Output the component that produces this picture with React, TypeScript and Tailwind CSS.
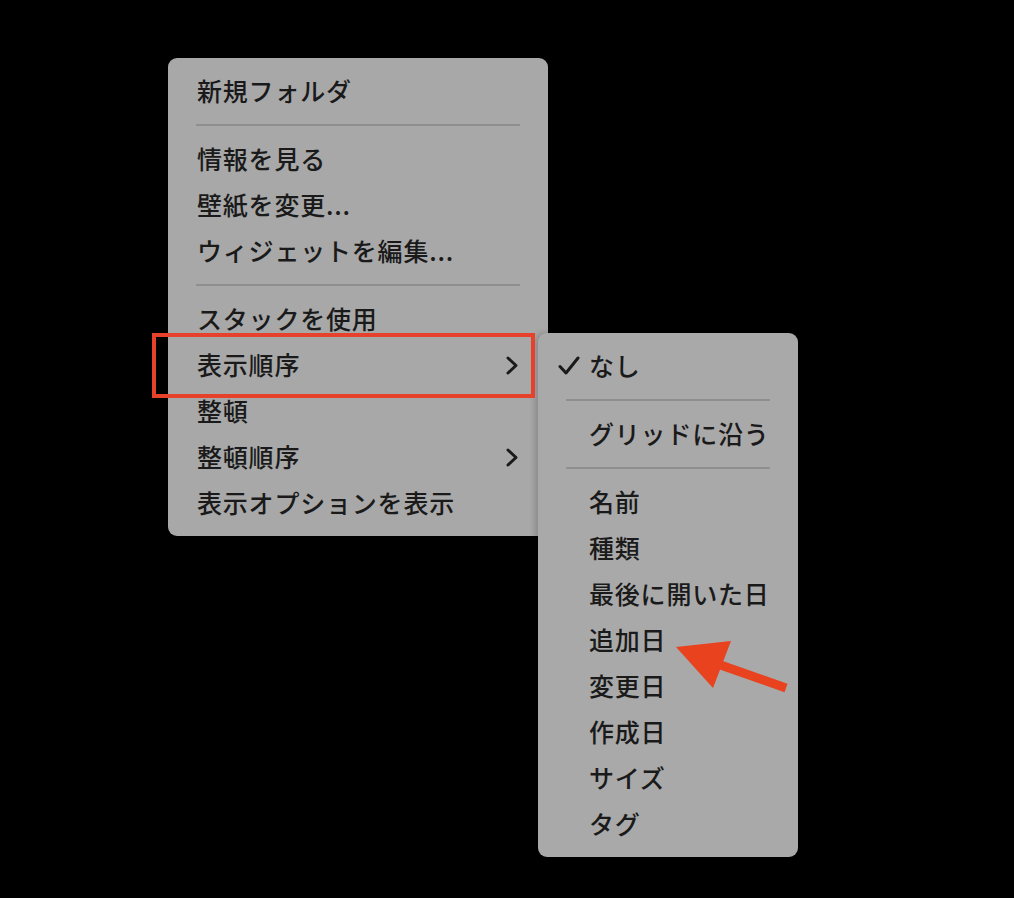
import React from "react";

const font = { fontFamily: '"Noto Sans CJK JP", "Noto Sans", sans-serif' };

function Sep() {
  return (
    <div className="h-[22px] flex items-center px-[28px]">
      <div className="h-[2px] w-full bg-[#8f8f8f]" />
    </div>
  );
}

function Item({ label, chevron, check, pl = "pl-[29px]" }: { label: string; chevron?: boolean; check?: boolean; pl?: string }) {
  return (
    <div className={`relative h-[46px] flex items-center ${pl} pr-[30px] text-[25px] leading-none tracking-[0.8px] text-[#1a1a1a] font-medium`}>
      {check && (
        <svg className="absolute left-[20px] top-[13px]" width="22" height="20" viewBox="0 0 22 20">
          <polyline points="2,10.5 8,17 20,2" fill="none" stroke="#1a1a1a" strokeWidth="3" strokeLinecap="round" strokeLinejoin="round" />
        </svg>
      )}
      <span className="flex-1 whitespace-nowrap -mt-[1px]">{label}</span>
      {chevron && (
        <svg className="-ml-[1px]" width="12" height="19" viewBox="0 0 12 19">
          <polyline points="2,2 10,9.5 2,17" fill="none" stroke="#1a1a1a" strokeWidth="3" strokeLinecap="round" strokeLinejoin="round" />
        </svg>
      )}
    </div>
  );
}

export default function App() {
  return (
    <div className="relative w-[1014px] h-[898px] bg-black overflow-hidden" style={font}>
      <div className="pt-[58px] pl-[168px]">
        <div className="w-[380px] rounded-[9px] bg-[#a8a8a8] py-[10px]">
          <Item label="新規フォルダ" />
          <Sep />
          <Item label="情報を見る" />
          <Item label="壁紙を変更..." />
          <Item label="ウィジェットを編集..." />
          <Sep />
          <Item label="スタックを使用" />
          <Item label="表示順序" chevron />
          <Item label="整頓" />
          <Item label="整頓順序" chevron />
          <Item label="表示オプションを表示" />
        </div>
      </div>

      <div className="absolute left-[538px] top-[333px] w-[260px] rounded-[9px] bg-[#a9a9a9] py-[10px] shadow-[-3px_0_6px_rgba(0,0,0,0.18)]">
        <Item label="なし" check pl="pl-[51px]" />
        <Sep />
        <Item label="グリッドに沿う" pl="pl-[51px]" />
        <Sep />
        <Item label="名前" pl="pl-[51px]" />
        <Item label="種類" pl="pl-[51px]" />
        <Item label="最後に開いた日" pl="pl-[51px]" />
        <Item label="追加日" pl="pl-[51px]" />
        <Item label="変更日" pl="pl-[51px]" />
        <Item label="作成日" pl="pl-[51px]" />
        <Item label="サイズ" pl="pl-[51px]" />
        <Item label="タグ" pl="pl-[51px]" />
      </div>

      <div className="absolute left-[152px] top-[333px] w-[383px] h-[65px] border-[4px] border-[#e5412b] pointer-events-none" />

      <svg className="absolute left-0 top-0 pointer-events-none" width="1014" height="898" viewBox="0 0 1014 898">
        <line x1="712" y1="662" x2="786" y2="688" stroke="#e8421f" strokeWidth="9" />
        <polygon points="676,647 731,641 713,688" fill="#e8421f" />
      </svg>
    </div>
  );
}
